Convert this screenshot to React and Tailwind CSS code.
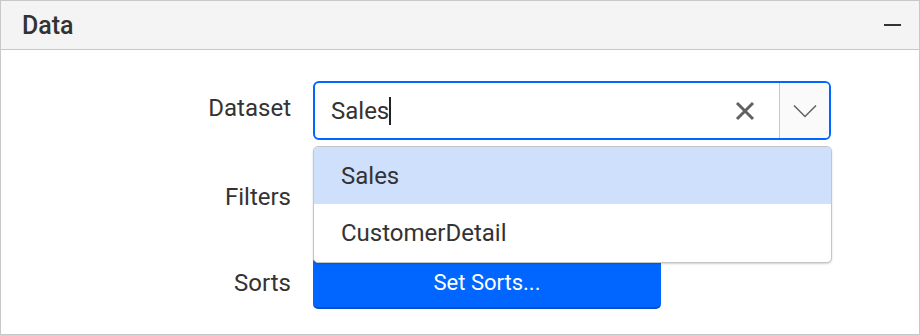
import React from "react";

const labelCls = "w-[290px] shrink-0 text-right text-[24px] text-[#333333]";

const App = () => {
  return (
    <div
      className="relative w-[920px] h-[335px] border border-[#c8c8c8] bg-white text-[#333333]"
      style={{ fontFamily: "Roboto, 'Liberation Sans', sans-serif" }}
    >
      {/* header */}
      <div className="h-[49px] flex items-center justify-between bg-[#f4f4f4] border-b border-[#c8c8c8] pl-[21px] pr-[18px]">
        <span className="text-[25px] font-medium leading-none">Data</span>
        <span className="block w-[17px] h-[2px] bg-[#333333]" />
      </div>

      {/* body */}
      <div className="pt-[31px] flex flex-col">
        <div className="flex items-center gap-[22px]">
          <div className={labelCls + " -mt-[5px]"}>Dataset</div>
          <div className="w-[518px] h-[59px] flex border-2 border-[#0066ff] rounded-[6px] overflow-hidden">
            <div className="flex-1 flex items-center pl-[16px]">
              <span className="text-[24px] text-[#333333]">Sales</span>
              <span className="block w-[2px] h-[28px] bg-[#222222]" />
              <div className="flex-1" />
              <svg width="20" height="20" viewBox="0 0 20 20" className="mr-[24px]">
                <path d="M2 2 L18 18 M18 2 L2 18" stroke="#616161" strokeWidth="3" />
              </svg>
            </div>
            <div className="w-[50px] flex items-center justify-center bg-[#fafafa] border-l border-[#c8c8c8]">
              <svg width="24" height="14" viewBox="0 0 24 14">
                <path d="M1 1.5 L12 12.5 L23 1.5" fill="none" stroke="#616161" strokeWidth="1.5" />
              </svg>
            </div>
          </div>
        </div>

        <div className="flex items-center gap-[22px] mt-[31px]">
          <div className={labelCls}>Filters</div>
          <button className="w-[348px] h-[52px] rounded-[5px] bg-[#0066ff] border-b-2 border-[#0050d0] text-white text-[22px]">
            Set Filters...
          </button>
        </div>

        <div className="flex items-center gap-[22px] mt-[34px]">
          <div className={labelCls}>Sorts</div>
          <button className="w-[348px] h-[52px] rounded-[5px] bg-[#0066ff] border-b-2 border-[#0050d0] text-white text-[22px]">
            Set Sorts...
          </button>
        </div>
      </div>

      {/* popup list */}
      <div className="absolute left-[312px] top-[145px] w-[519px] bg-white border border-[#c6c6c6] rounded-[5px] shadow-[0_1px_2px_rgba(0,0,0,0.18)] overflow-hidden">
        <div className="h-[57px] flex items-center pl-[27px] bg-[#cfe0fc] text-[24px] text-[#333333]">
          Sales
        </div>
        <div className="h-[58px] flex items-center pl-[27px] text-[24px] text-[#333333]">
          CustomerDetail
        </div>
      </div>
    </div>
  );
};

export default App;
